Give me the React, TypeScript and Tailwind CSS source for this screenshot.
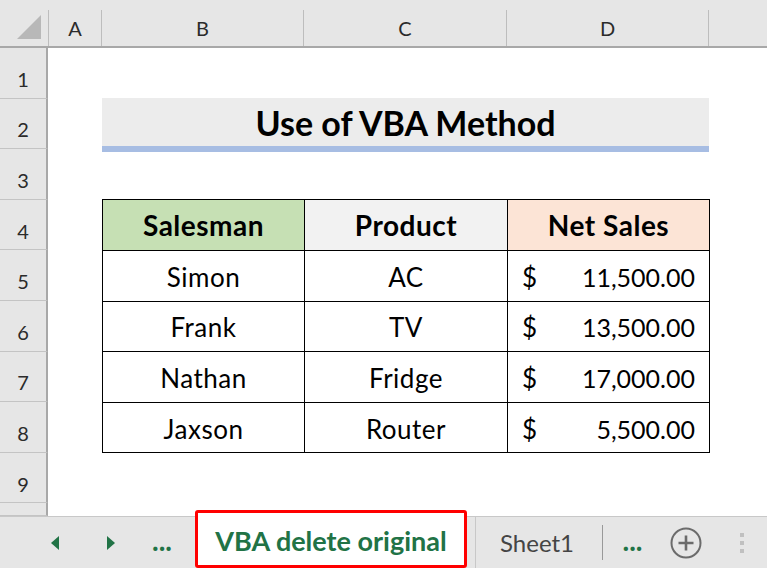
import React from 'react';

const COLS = ['A', 'B', 'C', 'D', ''];
const COL_W = ['w-[54px]', 'w-[202px]', 'w-[203px]', 'w-[202px]', 'flex-1'];

const ROWS = [
  { name: 'Simon', product: 'AC', sales: '11,500.00' },
  { name: 'Frank', product: 'TV', sales: '13,500.00' },
  { name: 'Nathan', product: 'Fridge', sales: '17,000.00' },
  { name: 'Jaxson', product: 'Router', sales: '5,500.00' },
];

const font = { fontFamily: 'Lato, "Open Sans", sans-serif' };

function ColumnHeader() {
  return (
    <div className="flex h-[48px] bg-[#e6e6e6] border-b-2 border-[#a8a8a8]">
      <div className="w-[48px] shrink-0 flex items-end justify-end pr-[7px] pb-[7px]">
        <svg width="24" height="24" viewBox="0 0 24 24">
          <polygon points="24,0 24,24 0,24" fill="#b8b8b8" />
        </svg>
      </div>
      {COLS.map((c, i) => (
        <div key={i} className={`${COL_W[i]} shrink-0 flex flex-col`}>
          <div className="h-[10px]" />
          <div
            className={`flex-1 flex items-center justify-center text-[20px] text-[#2b2b2b] ${
              i < 4 ? 'border-r border-[#bdbdbd]' : ''
            } ${i === 0 ? 'border-l border-[#bdbdbd]' : ''}`}
          >
            {c}
          </div>
        </div>
      ))}
    </div>
  );
}

function RowHead({ n, h = 'h-[50.6px]' }: { n: string; h?: string }) {
  return (
    <div
      className={`w-[48px] shrink-0 ${h} bg-[#e6e6e6] border-r-2 border-[#a8a8a8] border-b border-b-[#c4c4c4] flex items-center justify-center pt-[12px] text-[20px] text-[#2b2b2b]`}
    >
      {n}
    </div>
  );
}

export default function App() {
  return (
    <div className="w-[767px] h-[568px] overflow-hidden bg-white flex flex-col" style={font}>
      <ColumnHeader />
      <div className="flex">
        <div className="flex flex-col">
          {['1', '2', '3', '4', '5', '6', '7', '8', '9'].map((n) => (
            <RowHead key={n} n={n} />
          ))}
          <RowHead n="" h="h-[9px]" />
        </div>
        <div className="flex-1 flex flex-col">
          <div className="h-[50px]" />
          <div className="ml-[54px] w-[607px] h-[54px] bg-[#ececec] border-b-[6px] border-[#a7bde3] flex items-center justify-center text-[34px] font-bold text-black">
            Use of VBA Method
          </div>
          <div className="h-[47px]" />
          <table className="ml-[54px] w-[608px] border-collapse text-black">
            <thead>
              <tr className="h-[51px] text-[28px] font-bold tracking-[0.5px]">
                <th className="w-[202px] border-[1.5px] border-black bg-[#c6e0b4]">Salesman</th>
                <th className="w-[203px] border-[1.5px] border-black bg-[#f2f2f2]">Product</th>
                <th className="w-[202px] border-[1.5px] border-black bg-[#fce4d6]">Net Sales</th>
              </tr>
            </thead>
            <tbody>
              {ROWS.map((r) => (
                <tr key={r.name} className="h-[50.6px] text-[26px]">
                  <td className="border-[1.5px] border-black text-center tracking-[0.5px] pt-[3px]">{r.name}</td>
                  <td className="border-[1.5px] border-black text-center tracking-[0.5px] pt-[3px]">{r.product}</td>
                  <td className="border-[1.5px] border-black pt-[3px]">
                    <div className="flex items-baseline justify-between pl-[14px] pr-[14px]">
                      <span>$</span>
                      <span className="text-[25px]">{r.sales}</span>
                    </div>
                  </td>
                </tr>
              ))}
            </tbody>
          </table>
        </div>
      </div>

      {/* sheet tabs */}
      <div className="flex-1 flex items-stretch bg-[#e6e6e6] border-t border-[#c8c8c8]">
        <div className="w-[195px] shrink-0 flex items-center text-[#217346]">
          <svg className="ml-[50px]" width="10" height="16" viewBox="0 0 10 16">
            <polygon points="9,1 9,15 1,8" fill="#217346" />
          </svg>
          <svg className="ml-[46px]" width="10" height="16" viewBox="0 0 10 16">
            <polygon points="1,1 1,15 9,8" fill="#217346" />
          </svg>
          <span className="ml-[36px] text-[28px] font-bold leading-none pb-[6px]">...</span>
        </div>
        <div className="w-[272px] shrink-0 mt-[-7px] bg-white border-[3px] border-[#ff0000] rounded-[3px] flex items-center justify-center pt-[4px] text-[27px] font-bold text-[#217346]">
          VBA delete original
        </div>
        <div className="w-[127px] shrink-0 ml-[8px] border-l border-[#c8c8c8] flex items-center pl-[24px] text-[24px] text-[#444]">
          Sheet1
        </div>
        <div className="w-px my-[8px] bg-[#999]" />
        <div className="w-[59px] flex items-center justify-center text-[28px] font-bold leading-none text-[#217346] pb-[6px]">
          ...
        </div>
        <div className="w-[47px] flex items-center justify-center">
          <svg width="32" height="32" viewBox="0 0 32 32">
            <circle cx="16" cy="16" r="14.5" fill="none" stroke="#6b6b6b" strokeWidth="2" />
            <path d="M16 8.5v15M8.5 16h15" stroke="#6b6b6b" strokeWidth="2.6" />
          </svg>
        </div>
        <div className="flex-1 flex flex-col items-center justify-center gap-[4px] pl-[7px]">
          <span className="w-[4px] h-[4px] bg-[#c0c0c0]" />
          <span className="w-[4px] h-[4px] bg-[#c0c0c0]" />
          <span className="w-[4px] h-[4px] bg-[#c0c0c0]" />
        </div>
      </div>
    </div>
  );
}
